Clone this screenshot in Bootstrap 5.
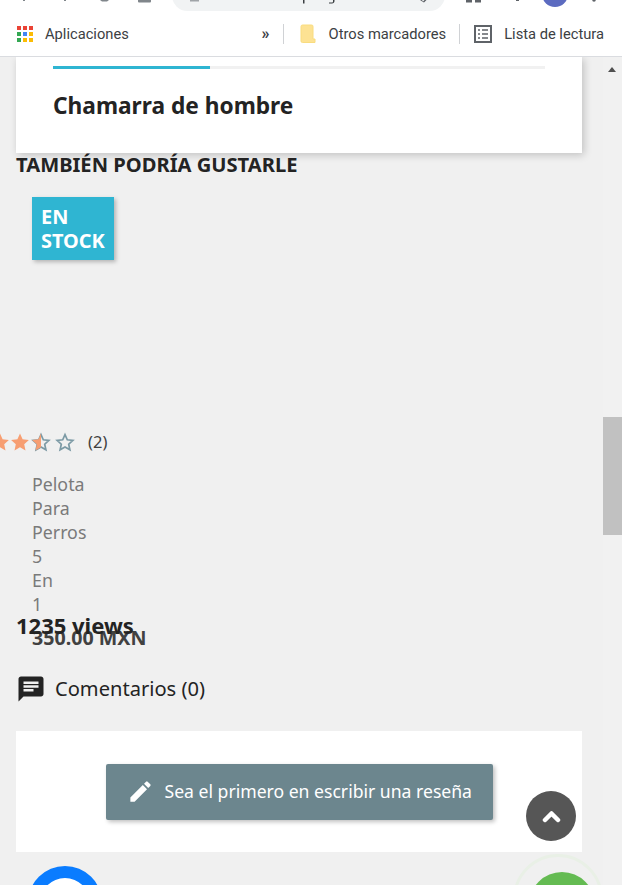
<!DOCTYPE html>
<html lang="es">
<head>
<meta charset="UTF-8">
<title>Chamarra de hombre</title>
<link href="https://cdn.jsdelivr.net/npm/bootstrap@5.3.0/dist/css/bootstrap.min.css" rel="stylesheet">
<style>
  html, body { height: 885px; overflow: hidden; }
  body { font-family: "Noto Sans", "Open Sans", sans-serif; background: #f0f0f0; color: #232323; }
  .browser-top { height: 57px; background: #fff; border-bottom: 1px solid #dadce0; font-family: Roboto, "Liberation Sans", sans-serif; overflow: hidden; }
  .tool-strip { height: 12px; position: relative; }
  .tool-marks { position: absolute; left: 0; top: 0; }
  .url-pill { position: absolute; left: 172px; width: 273px; top: -20px; height: 31px; background: #f1f3f4; border-radius: 16px; }
  .avatar-dot { position: absolute; left: 542px; top: -19px; width: 26px; height: 26px; border-radius: 50%; background: #5c6bc0; }
  .bookmarks { height: 44px; padding: 0 18px 0 17px; font-size: 14.7px; color: #3c4043; }
  .bm-text { padding-top: 1px; }
  .bm-sep { width: 1px; height: 20px; background: #d0d2d5; }
  .apps-label { margin-left: 10px; }
  .more-mark { margin-left: auto; margin-right: 13px; font-weight: 700; font-size: 16px; }
  .folder-ico { margin: 0 13px 0 16px; }
  .reader-ico { margin: 0 12px 0 14px; }
  .otros-label { margin-right: 13px; }
  .page-wrap { height: 828px; }
  .page-area { flex: 1 1 auto; min-width: 0; padding: 0 21px 0 16px; position: relative; overflow: hidden; }
  .fake-scroll { width: 19px; background: #f1f1f1; position: relative; flex: none; }
  .scroll-thumb { position: absolute; left: 0; right: 0; top: 360px; height: 118px; background: #c1c1c1; }
  .scroll-arrow { position: absolute; left: 5px; top: 10px; width: 0; height: 0; border: 4px solid transparent; border-top: 0; border-bottom: 5px solid #505050; }
  .info-card { height: 96px; background: #fff; padding: 9px 37px 0; box-shadow: 2px 2px 8px rgba(0,0,0,.2); }
  .tab-rail { height: 3px; background: #f1f1f1; }
  .tab-on { width: 157px; height: 3px; background: #2fb5d2; }
  .info-title { font-size: 22.7px; font-weight: 700; color: #232323; margin: 22px 0 0; line-height: 30px; }
  .also-title { font-size: 20.15px; font-weight: 700; line-height: 22px; margin: 0 0 2px; text-transform: uppercase; }
  .related-box { height: 433px; padding: 20px 0 0 16px; }
  .stock-flag { width: 82px; height: 63px; background: #2fb5d2; color: #fff; font-size: 19.9px; font-weight: 700; line-height: 24px; padding: 8px 9px; box-shadow: 2px 2px 4px rgba(0,0,0,.25); text-transform: uppercase; }
  .rate-row { margin: 170px 0 0 -32px; height: 24px; font-size: 16.5px; color: #414141; }
  .rate-count { margin-left: 8px; }
  .prod-name { width: 30px; color: #7a7a7a; font-size: 17.8px; line-height: 24px; margin-top: 18px; }
  .prod-price { font-size: 19.65px; font-weight: 700; color: #414141; line-height: 24px; margin-top: 10px; }
  .views-line { font-size: 22px; font-weight: 700; line-height: 30px; margin: 0; color: #232323; position: relative; }
  .comment-head { font-size: 20.1px; line-height: 30px; margin-top: 34px; color: #232323; }
  .comment-ico { margin-right: 9px; }
  .review-box { height: 121px; margin-top: 27px; background: #fff; padding-top: 33px; }
  .review-btn { width: 387px; height: 56px; padding: 0 0 2px 21px; background: #6c868e; color: #fff; border: 0; border-radius: 2px; font-size: 17.6px; box-shadow: 2px 2px 4px rgba(0,0,0,.25); }
  .pen-ico { margin-right: 11px; }
  .to-top { position: absolute; left: 526px; top: 734px; width: 50px; height: 50px; border-radius: 50%; background: #565656; }
  .fb-bubble { position: absolute; left: 28px; top: 809px; width: 74px; height: 74px; border-radius: 50%; background: #0a7cff; padding: 12px; }
  .fb-inner { width: 50px; height: 50px; border-radius: 50%; background: #fff; }
  .wa-ring { position: absolute; left: 513px; top: 797px; width: 90px; height: 90px; border-radius: 50%; border: 3px solid #e9f0e6; }
  .wa-bubble { position: absolute; left: 529px; top: 815px; width: 66px; height: 66px; border-radius: 50%; background: #64bb52; }
</style>
</head>
<body>
  <div class="browser-top">
    <div class="tool-strip">
      <div class="url-pill"></div>
      <div class="avatar-dot"></div>
      <svg class="tool-marks" width="622" height="12" viewBox="0 0 622 12" fill="#80868b">
        <rect x="23" y="0" width="2" height="1"/>
        <rect x="64" y="0" width="2" height="1"/>
        <path d="M100 0h9l-2 1.500h-5z"/>
        <path d="M138 0h13v1.500a1 1 0 0 1-1 1h-11a1 1 0 0 1-1-1z"/>
        <rect x="190" y="0" width="9" height="1.500" fill="#a0a4a8"/>
        <path d="M303 0h1.500v3.500H303zM333 0h1.500v1c0 1.500-1 2.500-2.500 2.500h-3V2.500h3c.6 0 1-.4 1-1z" fill="#3c4043"/>
        <path d="M420 0h2l1 1.500 1.500-1.500h2l-2.500 2.500L423 2z" fill="#5f6368"/>
        <rect x="466" y="0" width="6" height="2.500" fill="#5f6368"/><rect x="475" y="0" width="6" height="2.500" fill="#5f6368"/>
        <rect x="516" y="0" width="3" height="1" fill="#5f6368"/>
        <circle cx="594" cy="0" r="1.800" fill="#5f6368"/>
      </svg>
    </div>
    <div class="bookmarks d-flex align-items-center">
      <svg width="18" height="18" viewBox="0 0 18 18"><g>
        <rect x="0" y="1" width="4" height="4" fill="#ea4335"/><rect x="6" y="1" width="4" height="4" fill="#ea4335"/><rect x="12" y="1" width="4" height="4" fill="#ea4335"/>
        <rect x="0" y="7" width="4" height="4" fill="#34a853"/><rect x="6" y="7" width="4" height="4" fill="#4285f4"/><rect x="12" y="7" width="4" height="4" fill="#fbbc05"/>
        <rect x="0" y="13" width="4" height="4" fill="#34a853"/><rect x="6" y="13" width="4" height="4" fill="#fbbc05"/><rect x="12" y="13" width="4" height="4" fill="#fbbc05"/></g></svg>
      <span class="apps-label bm-text">Aplicaciones</span>
      <span class="more-mark">»</span>
      <span class="bm-sep"></span>
      <svg class="folder-ico" width="16" height="20" viewBox="0 0 16 20"><path d="M2.500 1h9c1 0 1.500.5 1.500 1.500V15h2v3.500H2.500a1.500 1.500 0 0 1-1.500-1.500V2.500A1.500 1.500 0 0 1 2.500 1z" fill="#fde293" stroke="#f9dc7f"/></svg>
      <span class="otros-label bm-text">Otros marcadores</span>
      <span class="bm-sep"></span>
      <svg class="reader-ico" width="18" height="18" viewBox="0 0 18 18"><rect x="1" y="1" width="16" height="16" fill="none" stroke="#5f6368" stroke-width="2"/><path d="M4 5h2M8 5h6M4 9h2M8 9h6M4 13h2M8 13h6" stroke="#5f6368" stroke-width="1.600"/></svg>
      <span class="bm-text">Lista de lectura</span>
    </div>
  </div>

  <div class="page-wrap d-flex">
    <div class="page-area">
      <div class="info-card">
        <div class="tab-rail"><div class="tab-on"></div></div>
        <h2 class="info-title">Chamarra de hombre</h2>
      </div>
      <h3 class="also-title">También podría gustarle</h3>
      <div class="related-box">
        <div class="stock-flag">En stock</div>
        <div class="rate-row d-flex align-items-center">
          <svg width="80" height="20" viewBox="0 0 80 20">
            <path d="M0 1.500l2.600 5.800 6.300.7-4.700 4.200 1.300 6.200L0 15.300l-5.500 3.100 1.300-6.200L-8.900 8l6.300-.7z" fill="#f79e72"/>
            <path d="M20 1.500l2.600 5.800 6.300.7-4.700 4.200 1.300 6.200-5.500-3.100-5.500 3.100 1.300-6.200L11.100 8l6.300-.7z" fill="#f79e72"/>
            <path d="M41 2.600l2.300 5.200 5.600.6-4.200 3.800 1.200 5.500-4.900-2.800-4.900 2.800 1.200-5.500-4.200-3.800 5.600-.6z" fill="none" stroke="#7c9aa5" stroke-width="1.700"/>
            <path d="M41 1.500v13.800l-5.500 3.100 1.300-6.200L32.100 8l6.300-.7z" fill="#f79e72"/>
            <path d="M65 2.600l2.300 5.200 5.600.6-4.200 3.800 1.200 5.500-4.900-2.800-4.900 2.800 1.200-5.500-4.200-3.800 5.600-.6z" fill="none" stroke="#7c9aa5" stroke-width="1.700"/>
          </svg>
          <span class="rate-count">(2)</span>
        </div>
        <div class="prod-name">Pelota Para Perros 5 En 1</div>
        <div class="prod-price text-nowrap">350.00 MXN</div>
      </div>
      <p class="views-line">1235 views</p>
      <div class="comment-head d-flex align-items-center">
        <svg class="comment-ico" width="30" height="30" viewBox="0 0 24 24"><path d="M20 2H4c-1.100 0-1.990.9-1.990 2L2 22l4-4h14c1.100 0 2-.9 2-2V4c0-1.100-.9-2-2-2zM6 9h12v2H6V9zm8 5H6v-2h8v2zm4-6H6V6h12v2z" fill="#232323"/></svg>
        <span>Comentarios (0)</span>
      </div>
      <div class="review-box">
        <button class="review-btn d-flex align-items-center mx-auto">
          <svg class="pen-ico" width="27" height="27" viewBox="0 0 24 24"><path d="M3 17.250V21h3.750L17.800 9.940l-3.750-3.750zM20.700 7.040a1 1 0 0 0 0-1.410l-2.340-2.340a1 1 0 0 0-1.410 0l-1.830 1.830 3.750 3.750z" fill="#fff"/></svg>
          <span class="text-nowrap">Sea el primero en escribir una reseña</span>
        </button>
      </div>
      <div class="to-top d-flex align-items-center justify-content-center">
        <svg width="19" height="14" viewBox="0 0 19 14"><path d="M3 11l6.500-6.500L16 11" fill="none" stroke="#fff" stroke-width="4.500" stroke-linejoin="round" stroke-linecap="round"/></svg>
      </div>
      <div class="fb-bubble"><div class="fb-inner"></div></div>
      <div class="wa-ring"></div>
      <div class="wa-bubble"></div>
    </div>
    <div class="fake-scroll">
      <div class="scroll-arrow"></div>
      <div class="scroll-thumb"></div>
    </div>
  </div>
</body>
</html>
